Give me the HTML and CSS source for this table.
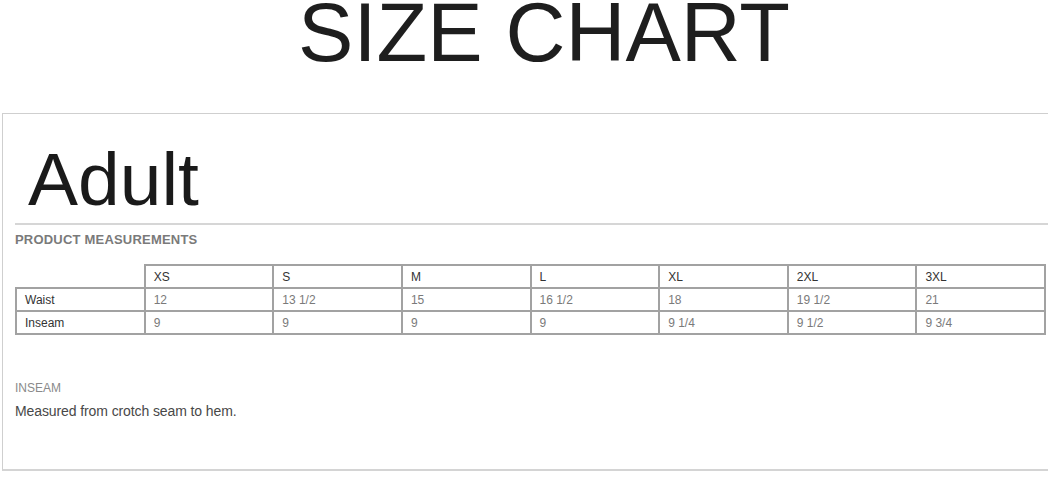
FILE: index.html
```html
<!DOCTYPE html>
<html>
<head>
<meta charset="utf-8">
<link rel="stylesheet" href="styles.css">
</head>
<body>
<h1 class="title">SIZE CHART</h1>
<section class="panel">
  <h2 class="group">Adult</h2>
  <div class="rule"></div>
  <h3 class="label">PRODUCT MEASUREMENTS</h3>
  <table class="chart">
    <tr>
      <th class="corner"></th>
      <th>XS</th><th>S</th><th>M</th><th>L</th><th>XL</th><th>2XL</th><th>3XL</th>
    </tr>
    <tr>
      <td class="name">Waist</td>
      <td>12</td><td>13 1/2</td><td>15</td><td>16 1/2</td><td>18</td><td>19 1/2</td><td>21</td>
    </tr>
    <tr>
      <td class="name">Inseam</td>
      <td>9</td><td>9</td><td>9</td><td>9</td><td>9 1/4</td><td>9 1/2</td><td>9 3/4</td>
    </tr>
  </table>
  <h4 class="note-title">INSEAM</h4>
  <p class="note">Measured from crotch seam to hem.</p>
</section>
</body>
</html>
```
FILE: styles.css
```css
html, body {
  margin: 0;
  padding: 0;
  background: #fff;
  font-family: "Liberation Sans", Arial, sans-serif;
}
.title {
  margin: 0 0 47px 0;
  padding-left: 36px;
  text-align: center;
  font-weight: normal;
  font-size: 83px;
  line-height: 66px;
  color: #1e1e1e;
}
.panel {
  box-sizing: border-box;
  width: 1046px;
  margin-left: 2px;
  border-top: 1px solid #cfcfcf;
  border-left: 1px solid #cfcfcf;
  border-bottom: 2px solid #d4d4d4;
  padding: 28px 0 50px 12px;
}
.group {
  margin: 0 0 6px 0;
  padding-left: 13px;
  font-weight: normal;
  font-size: 75px;
  line-height: 75px;
  color: #1a1a1a;
}
.rule {
  height: 2px;
  background: #d6d6d6;
}
.label {
  margin: 7px 0 0 0;
  font-size: 13px;
  line-height: 15px;
  font-weight: bold;
  letter-spacing: 0.2px;
  color: #7a7a7a;
}
.chart {
  margin: 17px 0 0 0;
  width: 1031px;
  table-layout: fixed;
  border-collapse: collapse;
  font-size: 12px;
}
.chart th, .chart td {
  border: 2px solid #a2a2a2;
  padding: 4px 8px 3px 8px;
  line-height: 14px;
  text-align: left;
  font-weight: normal;
  color: #7a7a7a;
}
.chart th {
  color: #333;
}
.chart .corner {
  border-top: none;
  border-left: none;
}
.chart .name {
  color: #333;
}
.note-title {
  margin: 46px 0 0 0;
  font-size: 12px;
  line-height: 14px;
  font-weight: normal;
  color: #8a8a8a;
}
.note {
  margin: 8px 0 0 0;
  font-size: 14px;
  line-height: 16px;
  letter-spacing: -0.1px;
  color: #484848;
}
```
